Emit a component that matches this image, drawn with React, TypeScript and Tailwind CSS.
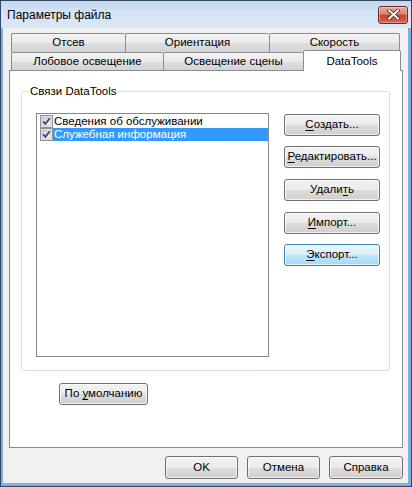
import React from 'react'

const segoe = "font-['Liberation_Sans',Arial,sans-serif] text-[11.5px]"
const tahoma = "font-['Liberation_Sans',Arial,sans-serif] text-[11.5px]"

function CloseButton() {
  return (
    <div className="flex h-[18px] w-[30px] items-center justify-center rounded-[3px] border border-[#6b2a20] bg-[linear-gradient(#e9a99b,#d98571_45%,#c3422c_50%,#d6664d)] shadow-[inset_0_0_0_1px_rgba(255,255,255,0.35)]">
      <svg width="13" height="11" viewBox="0 0 13 11">
        <path d="M2 1.5 L11 9.5 M11 1.5 L2 9.5" stroke="#5a1a10" strokeWidth="3.6" strokeLinecap="square" />
        <path d="M2 1.5 L11 9.5 M11 1.5 L2 9.5" stroke="#ffffff" strokeWidth="2" strokeLinecap="square" />
      </svg>
    </div>
  )
}

function CheckBox() {
  return (
    <svg width="13" height="13" viewBox="0 0 13 13" className="shrink-0">
      <defs>
        <linearGradient id="cbg" x1="0" y1="0" x2="1" y2="1">
          <stop offset="0" stopColor="#cbcfd5" />
          <stop offset="1" stopColor="#f6f6f6" />
        </linearGradient>
      </defs>
      <rect x="0.5" y="0.5" width="12" height="12" fill="#f4f4f4" stroke="#8e8f8f" />
      <rect x="2" y="2" width="9" height="9" fill="url(#cbg)" stroke="#aeb3b9" strokeWidth="0.6" />
      <path d="M3.2 6.3 L5.4 8.8 L9.8 3.2" fill="none" stroke="#394785" strokeWidth="1.8" />
    </svg>
  )
}

function Btn({
  children,
  className = '',
  active = false,
}: {
  children: React.ReactNode
  className?: string
  active?: boolean
}) {
  const look = active
    ? 'border-[#3c7fb1] bg-[linear-gradient(#eaf6fd,#d9f0fc_50%,#bee6fd_50%,#a7d9f5)]'
    : 'border-[#707070] bg-[linear-gradient(#f2f2f2,#ebebeb_50%,#dddddd_50%,#cfcfcf)]'
  return (
    <div
      className={`flex items-center justify-center rounded-[3px] border text-black shadow-[inset_0_0_0_1px_rgba(255,255,255,0.7)] ${look} ${className}`}
    >
      <span>{children}</span>
    </div>
  )
}

function U({ children }: { children: React.ReactNode }) {
  return <span className="underline decoration-1 underline-offset-[2px]">{children}</span>
}

const tabBase =
  'flex items-center justify-center rounded-t-[2px] border-[#898c95] bg-[linear-gradient(#f3f3f3,#ebebeb_50%,#dedede_50%,#d4d4d4)] text-black'

export default function App() {
  return (
    <div className="h-[487px] w-[412px] bg-[#34475e] p-px">
      <div className="flex h-full flex-col bg-[#7eb1e2]">
        <div className="flex h-[27px] items-center justify-between bg-[linear-gradient(#c4d8f1,#d3e2f5_40%,#dbe7f6)] pl-[6px] pr-[3px]">
          <span className="font-['Liberation_Sans',Arial,sans-serif] text-[12px] text-black">Параметры файла</span>
          <CloseButton />
        </div>

        <div className="mb-[3px] ml-[2px] mr-[3px] flex flex-1 flex-col bg-[#f0f0f0] pl-[6px] pr-[5px] pt-[5px]">
          {/* tabs */}
          <div className={`ml-[2px] flex h-[19px] ${tahoma}`}>
            <div className={`${tabBase} w-[114px] border-l border-t`}>Отсев</div>
            <div className={`${tabBase} w-[144px] border-l border-t`}>Ориентация</div>
            <div className={`${tabBase} w-[131px] border-x border-t`}>Скорость</div>
          </div>
          <div className={`ml-[2px] flex h-[18px] items-end ${tahoma}`}>
            <div className={`${tabBase} h-[18px] w-[152px] border-l border-t`}>Лобовое освещение</div>
            <div className={`${tabBase} h-[18px] w-[140px] border-l border-t`}>Освещение сцены</div>
            <div className="relative z-10 -mb-px flex h-[21px] w-[98px] items-start justify-center rounded-t-[2px] border-x border-t border-[#898c95] bg-white pt-[2px] text-black">
              DataTools
            </div>
          </div>

          {/* panel */}
          <div className={`h-[378px] border border-[#898c95] bg-white pl-[11px] pt-[12px] ${segoe}`}>
            <fieldset className="h-[288px] w-[369px] rounded-[3px] border border-[#d5dfe5] pl-[7px] shadow-[inset_0_0_0_1px_#ffffff]">
              <legend className="px-[1px] leading-[16px] text-black">Связи DataTools</legend>
              <div className="ml-[7px] mt-[14px] flex gap-[15px]">
                <div className="h-[244px] w-[233px] border border-[#828790] bg-white pl-[3px] pt-[1px]">
                  <div className="flex h-[13px] items-center">
                    <CheckBox />
                    <span className="pl-px leading-[13px] text-black">Сведения об обслуживании</span>
                  </div>
                  <div className="flex h-[13px] items-center">
                    <CheckBox />
                    <span className="h-[13px] flex-1 bg-[#3399ff] pl-px leading-[13px] text-white">
                      Служебная информация
                    </span>
                  </div>
                </div>
                <div className="flex flex-col">
                  <Btn className="mt-[1px] h-[22px] w-[96px]">
                    <U>С</U>оздать...
                  </Btn>
                  <Btn className="mt-[10px] h-[22px] w-[96px]">
                    <U>Р</U>едактировать...
                  </Btn>
                  <Btn className="mt-[11px] h-[22px] w-[96px]">
                    Удали<U>т</U>ь
                  </Btn>
                  <Btn className="mt-[11px] h-[22px] w-[96px]">
                    <U>И</U>мпорт...
                  </Btn>
                  <Btn active className="mt-[10px] h-[22px] w-[96px]">
                    <U>Э</U>кспорт...
                  </Btn>
                </div>
              </div>
            </fieldset>
            <Btn className="ml-[38px] mt-[12px] h-[22px] w-[89px]">
              По <U>у</U>молчанию
            </Btn>
          </div>

          {/* dialog buttons */}
          <div className={`mt-[8px] flex justify-end gap-[9px] ${tahoma}`}>
            <Btn className="h-[23px] w-[73px]">OK</Btn>
            <Btn className="h-[23px] w-[73px]">Отмена</Btn>
            <Btn className="h-[23px] w-[74px]">Справка</Btn>
          </div>
        </div>
      </div>
    </div>
  )
}
